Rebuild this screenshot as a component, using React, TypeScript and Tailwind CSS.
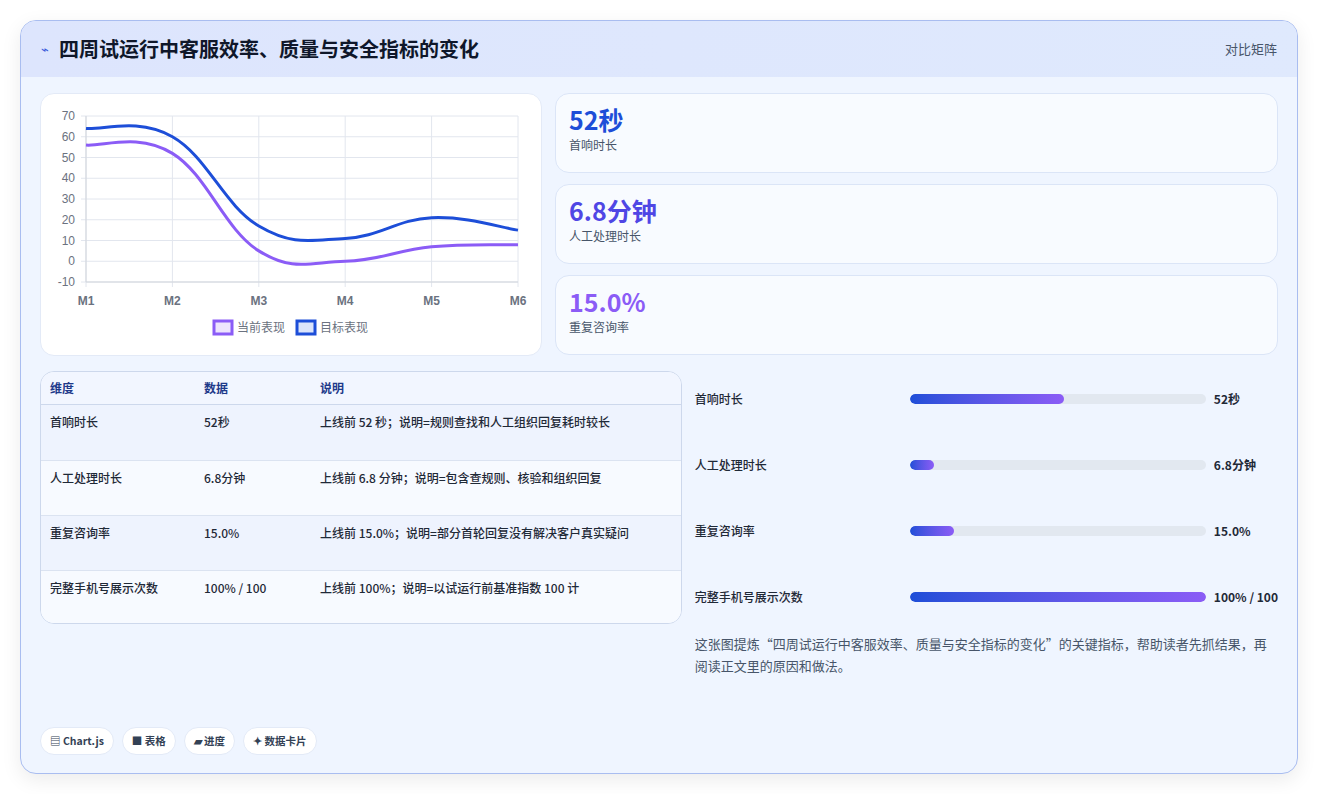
import React from "react";

const X0 = 45, X1 = 477, YT = 22, YB = 188;
const xs = [0, 1, 2, 3, 4, 5].map((i) => X0 + ((X1 - X0) / 5) * i);
const yv = (v: number) => YT + ((70 - v) / 80) * (YB - YT);

function path(vals: number[]) {
  const pts = vals.map((v, i) => [xs[i], yv(v)]);
  let d = `M${pts[0][0]},${pts[0][1]}`;
  const t = 0.4;
  for (let i = 0; i < pts.length - 1; i++) {
    const p0 = pts[Math.max(0, i - 1)], p1 = pts[i], p2 = pts[i + 1], p3 = pts[Math.min(pts.length - 1, i + 2)];
    const c1x = p1[0] + ((p2[0] - p0[0]) * t) / 2, c1y = p1[1] + ((p2[1] - p0[1]) * t) / 2;
    const c2x = p2[0] - ((p3[0] - p1[0]) * t) / 2, c2y = p2[1] - ((p3[1] - p1[1]) * t) / 2;
    d += ` C${c1x},${c1y} ${c2x},${c2y} ${p2[0]},${p2[1]}`;
  }
  return d;
}

function Chart() {
  const ticks = [70, 60, 50, 40, 30, 20, 10, 0, -10];
  return (
    <svg width="500" height="262" className="block">
      {ticks.map((t) => (
        <g key={t}>
          <line x1={X0 - 5} x2={X1} y1={yv(t)} y2={yv(t)} stroke="#e2e6ee" strokeWidth="1" />
          <text x={X0 - 11} y={yv(t) + 4} textAnchor="end" fontSize="12" fill="#6b7280" fontFamily="Liberation Sans, sans-serif">{t}</text>
        </g>
      ))}
      {xs.map((x, i) => (
        <g key={i}>
          <line x1={x} x2={x} y1={YT} y2={YB + 5} stroke="#e2e6ee" />
          <text x={x} y={211} textAnchor="middle" fontSize="12" fontWeight="bold" fill="#6b7280" fontFamily="Liberation Sans, sans-serif">M{i + 1}</text>
        </g>
      ))}
      <line x1={X0} x2={X0} y1={YT} y2={YB} stroke="#d1d5db" />
      <line x1={X0} x2={X1} y1={YB} y2={YB} stroke="#d1d5db" />
      <path d={path([56, 52, 5, 0, 7, 8])} fill="none" stroke="#8b5cf6" strokeWidth="3" />
      <path d={path([64, 60, 17, 11, 21, 15])} fill="none" stroke="#1d4ed8" strokeWidth="3" />
      <rect x="173" y="227" width="18" height="13" fill="#ede4fd" stroke="#8b5cf6" strokeWidth="3" />
      <text x="196" y="238" fontSize="12" fill="#6b7280" fontFamily="Noto Sans CJK SC, sans-serif">当前表现</text>
      <rect x="256" y="227" width="18" height="13" fill="#dbe4fb" stroke="#1d4ed8" strokeWidth="3" />
      <text x="279" y="238" fontSize="12" fill="#6b7280" fontFamily="Noto Sans CJK SC, sans-serif">目标表现</text>
    </svg>
  );
}

const kpis = [
  { v: "52秒", l: "首响时长", c: "text-[#1d4ed8]" },
  { v: "6.8分钟", l: "人工处理时长", c: "text-[#4f46e5]" },
  { v: "15.0%", l: "重复咨询率", c: "text-[#8b5cf6]" },
];
const rows = [
  ["首响时长", "52秒", "上线前 52 秒；说明=规则查找和人工组织回复耗时较长"],
  ["人工处理时长", "6.8分钟", "上线前 6.8 分钟；说明=包含查规则、核验和组织回复"],
  ["重复咨询率", "15.0%", "上线前 15.0%；说明=部分首轮回复没有解决客户真实疑问"],
  ["完整手机号展示次数", "100% / 100", "上线前 100%；说明=以试运行前基准指数 100 计"],
];
const bars = [
  ["首响时长", 52, "52秒"],
  ["人工处理时长", 8, "6.8分钟"],
  ["重复咨询率", 15, "15.0%"],
  ["完整手机号展示次数", 100, "100% / 100"],
] as const;

export default function App() {
  return (
    <div className="min-h-[794px] bg-white p-[20px] pb-[20px]" style={{ fontFamily: '"Noto Sans CJK SC", "Noto Sans", sans-serif' }}>
      <div className="h-[754px] rounded-[16px] border border-[#a9bdf0] bg-[#eff5ff] shadow-[0_6px_20px_rgba(0,0,0,0.08)] overflow-hidden flex flex-col">
        <div className="h-[56px] shrink-0 bg-gradient-to-r from-[#dde5fd] to-[#dfe9fd] flex items-center justify-between px-[20px]">
          <div className="flex items-center gap-[10px]">
            <span className="text-[#3b5bdb] text-[13px]">⌁</span>
            <span className="text-[20px] font-bold text-[#0f172a]">四周试运行中客服效率、质量与安全指标的变化</span>
          </div>
          <span className="text-[13px] text-[#475569]">对比矩阵</span>
        </div>
        <div className="flex-1 flex flex-col px-[19px] pt-[16px] pb-[18px]">
          <div className="flex gap-[13px]">
            <div className="w-[502px] h-[263px] rounded-[14px] bg-white border border-[#e3eaf7]">
              <Chart />
            </div>
            <div className="flex-1 flex flex-col gap-[11px]">
              {kpis.map((k) => (
                <div key={k.l} className="h-[80px] rounded-[14px] bg-[#f8fbff] border border-[#dbe5f7] px-[13px] pt-[7px]">
                  <div className={`text-[25px] font-bold leading-[36px] ${k.c}`}>{k.v}</div>
                  <div className="text-[12px] text-[#475569] leading-[16px]">{k.l}</div>
                </div>
              ))}
            </div>
          </div>
          <div className="flex gap-[13px] mt-[15px]">
            <div className="w-[644px] h-[253px] rounded-[14px] border border-[#cdd8ec] overflow-hidden bg-[#f7faff] text-[12px]">
              <div className="h-[33px] grid grid-cols-[154px_116px_1fr] items-center px-[9px] font-bold text-[#1e3a8a] border-b border-[#cdd8ec] bg-[#f2f6ff]">
                <span>维度</span><span>数据</span><span>说明</span>
              </div>
              {rows.map((r, i) => (
                <div key={i} className={`h-[55px] grid grid-cols-[154px_116px_1fr] px-[9px] pt-[8px] text-[#1f2937] font-medium ${i > 0 ? "border-t border-[#dbe3f1]" : ""} ${i % 2 === 0 ? "bg-[#eef3fe]" : "bg-[#f7faff]"}`}>
                  <span>{r[0]}</span><span>{r[1]}</span><span>{r[2]}</span>
                </div>
              ))}
            </div>
            <div className="flex-1 flex flex-col">
              <div className="flex flex-col gap-[45px] pt-[17px]">
                {bars.map(([l, p, v]) => (
                  <div key={l} className="flex items-center h-[21px] text-[12px] text-[#1f2937] font-medium">
                    <span className="w-[215px] shrink-0">{l}</span>
                    <div className="w-[296px] shrink-0 h-[10px] rounded-full bg-[#e2e8f0] overflow-hidden">
                      <div className="h-full rounded-full bg-gradient-to-r from-[#1d4ed8] to-[#8b5cf6]" style={{ width: `${p}%` }} />
                    </div>
                    <span className="ml-[8px] font-bold whitespace-nowrap">{v}</span>
                  </div>
                ))}
              </div>
              <p className="mt-[26px] text-[13px] leading-[22px] text-[#475569] pr-[4px]">
                这张图提炼“四周试运行中客服效率、质量与安全指标的变化”的关键指标，帮助读者先抓结果，再阅读正文里的原因和做法。
              </p>
            </div>
          </div>
          <div className="mt-auto flex gap-[8px]">
            {["▤ Chart.js", "■ 表格", "▰ 进度", "✦ 数据卡片"].map((b) => (
              <span key={b} className="h-[28px] px-[9px] rounded-full bg-white border border-[#e3eaf7] text-[10.5px] font-bold text-[#334155] flex items-center">{b}</span>
            ))}
          </div>
        </div>
      </div>
    </div>
  );
}
